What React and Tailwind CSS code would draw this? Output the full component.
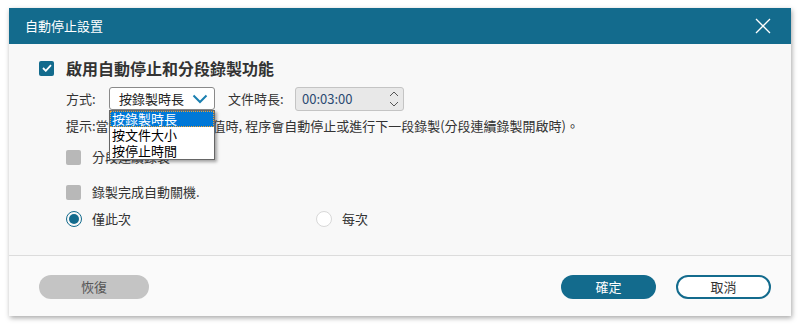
import React, { useState } from 'react';

const FONT = { fontFamily: '"Noto Sans CJK TC", "Noto Sans", sans-serif' };

const Check = () => (
  <svg width="10" height="8" viewBox="0 0 10 8" fill="none">
    <path d="M1 4l2.8 2.8L9 1.2" stroke="#fff" strokeWidth="1.8" />
  </svg>
);

const App = () => {
  const [mode, setMode] = useState('once');

  return (
    <div className="w-[800px] h-[325px] bg-white pt-[8px] pl-[9px]" style={FONT}>
      <div className="w-[782px] h-[308px] flex flex-col bg-[#f8f8f8] shadow-[1px_2px_5px_rgba(0,0,0,0.35)]">
        {/* Header */}
        <div className="h-[36px] bg-[#136b8d] flex items-center justify-between pl-[16px] pr-[20px] shrink-0">
          <span className="text-white text-[13px]">自動停止設置</span>
          <svg width="16" height="16" viewBox="0 0 16 16">
            <path d="M1 1L15 15M15 1L1 15" stroke="#fff" strokeWidth="1.3" />
          </svg>
        </div>

        {/* Body */}
        <div className="h-[212px] border-b border-[#dcdcdc] pl-[30px] pt-[14px] flex flex-col shrink-0 text-[#333]">
          <div className="flex items-center h-[20px]">
            <div className="w-[15px] h-[15px] rounded-[2px] bg-[#136b8d] flex items-center justify-center">
              <Check />
            </div>
            <span className="ml-[12px] text-[16px] font-bold text-[#333] leading-none">啟用自動停止和分段錄製功能</span>
          </div>

          <div className="flex items-center h-[23px] mt-[9px] pl-[27px] text-[13px]">
            <span className="w-[43px]">方式:</span>
            <div className="relative">
              <div className="w-[106px] h-[23px] rounded-[3px] border border-[#8a8a8a] bg-white flex items-center justify-between pl-[9px] pr-[6px] text-[#222]">
                <span>按錄製時長</span>
                <svg width="16" height="10" viewBox="0 0 16 10">
                  <path d="M1.5 1.5L8 8l6.5-6.5" stroke="#1a7fb0" strokeWidth="2" fill="none" />
                </svg>
              </div>
              {/* Open dropdown list */}
              <div className="absolute left-0 top-[23px] w-[106px] bg-white border border-[#666] shadow-[2px_2px_3px_rgba(0,0,0,0.35)] z-10 text-[13px] text-black leading-[16px]">
                <div className="bg-[#0078d7] text-white pl-[2px] h-[16px] outline-1 outline-dotted outline-[#f0a030] -outline-offset-1">按錄製時長</div>
                <div className="pl-[2px] h-[16px]">按文件大小</div>
                <div className="pl-[2px] h-[16px]">按停止時間</div>
              </div>
            </div>
            <span className="ml-[13px] w-[67px]">文件時長:</span>
            <div className="w-[109px] h-[24px] rounded-[3px] border border-[#c4c4c4] bg-[#e8e8e8] flex items-center justify-between pl-[6px] pr-[4px]">
              <span className="text-[#2b4a72] text-[13px]">00:03:00</span>
              <div className="flex flex-col gap-[4px]">
                <svg width="10" height="6" viewBox="0 0 10 6">
                  <path d="M1 5L5 1l4 4" stroke="#555" strokeWidth="1" fill="none" />
                </svg>
                <svg width="10" height="6" viewBox="0 0 10 6">
                  <path d="M1 1l4 4 4-4" stroke="#555" strokeWidth="1" fill="none" />
                </svg>
              </div>
            </div>
          </div>

          <div className="h-[20px] mt-[6px] pl-[27px] text-[13px] leading-[20px]">
            提示:當錄製時長達到設定值時, 程序會自動停止或進行下一段錄製(分段連續錄製開啟時)。
          </div>

          <div className="flex items-center h-[16px] mt-[13px] pl-[27px]">
            <div className="w-[15px] h-[15px] rounded-[2px] bg-[#b8b8b8]" />
            <span className="ml-[11px] text-[13px]">分段連續錄製</span>
          </div>

          <div className="flex items-center h-[16px] mt-[19px] pl-[27px]">
            <div className="w-[15px] h-[15px] rounded-[2px] bg-[#b8b8b8]" />
            <span className="ml-[11px] text-[13px]">錄製完成自動關機.</span>
          </div>

          <div className="flex items-center h-[16px] mt-[11px] pl-[27px] text-[13px]">
            <button className="flex items-center w-[250px]" onClick={() => setMode('once')}>
              <span className="w-[16px] h-[16px] rounded-full border-[1.5px] border-[#136b8d] flex items-center justify-center">
                {mode === 'once' && <span className="w-[10px] h-[10px] rounded-full bg-[#136b8d]" />}
              </span>
              <span className="ml-[10px]">僅此次</span>
            </button>
            <button className="flex items-center" onClick={() => setMode('every')}>
              <span className="w-[16px] h-[16px] rounded-full border border-[#d8d8d8] bg-white flex items-center justify-center">
                {mode === 'every' && <span className="w-[10px] h-[10px] rounded-full bg-[#136b8d]" />}
              </span>
              <span className="ml-[10px]">每次</span>
            </button>
          </div>
        </div>

        {/* Footer */}
        <div className="flex-1 bg-[#fafafa] flex items-center pl-[30px] pr-[20px] pt-[1px]">
          <button className="w-[110px] h-[24px] rounded-full bg-[#c4c4c4] text-[#555] text-[13px]">恢復</button>
          <div className="flex-1" />
          <button className="w-[95px] h-[24px] rounded-full bg-[#136b8d] text-white text-[13px]">確定</button>
          <button className="ml-[20px] w-[95px] h-[24px] rounded-full border-2 border-[#136b8d] bg-white text-[#333] text-[13px]">取消</button>
        </div>
      </div>
    </div>
  );
};

export default App;
